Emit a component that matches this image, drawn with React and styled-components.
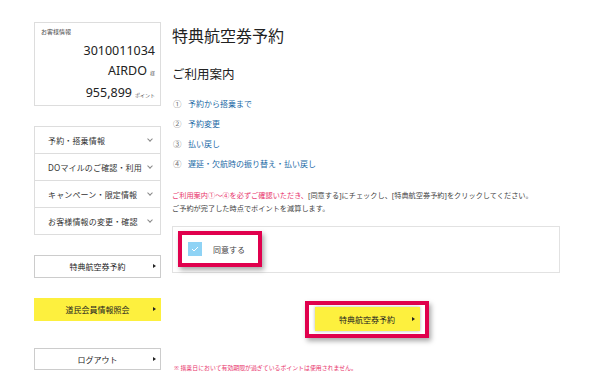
import React from 'react'
import styled, { createGlobalStyle } from 'styled-components'

const Global = createGlobalStyle`
  body {
    margin: 0;
    background: #fff;
    font-family: "Noto Sans", "Noto Sans CJK JP", sans-serif;
    color: #333;
  }
`

const Page = styled.div`
  display: flex;
  gap: 11px;
  padding: 22px 0 0 34px;
  width: 600px;
  height: 378px;
  box-sizing: border-box;
  overflow: hidden;
`

const Side = styled.div`
  width: 127px;
  display: flex;
  flex-direction: column;
`

const InfoBox = styled.div`
  border: 1px solid #ddd;
  height: 84px;
  box-sizing: border-box;
  padding: 5px 5px 0 6px;
  text-align: right;
`

const InfoLabel = styled.div`
  font-size: 6px;
  text-align: left;
  line-height: 8px;
  color: #444;
`

const InfoLine = styled.div`
  font-size: 12.5px;
  line-height: 20px;
  color: #222;
  margin-top: ${p => (p.first ? '5px' : '0')};
  small {
    font-size: 5px;
    margin-left: 3px;
    color: #555;
  }
`

const Nav = styled.ul`
  list-style: none;
  margin: 20px 0 0;
  padding: 0;
  border: 1px solid #ddd;
`

const NavItem = styled.li`
  height: 26px;
  display: flex;
  align-items: center;
  justify-content: space-between;
  padding: 0 8px 0 13px;
  font-size: 8px;
  letter-spacing: 0.15px;
  color: #333;
  & + & {
    border-top: 1px solid #ddd;
  }
`

const Chevron = styled.span`
  width: 3px;
  height: 3px;
  border-right: 1px solid #888;
  border-bottom: 1px solid #888;
  transform: rotate(45deg);
  margin-top: -3px;
`

const SideButton = styled.div`
  height: ${p => p.h || 23}px;
  margin-top: ${p => p.mt}px;
  display: flex;
  align-items: center;
  justify-content: center;
  position: relative;
  font-size: 8px;
  color: #222;
  background: ${p => (p.yellow ? '#fdf03e' : '#fff')};
  border: 1px solid ${p => (p.yellow ? '#fdf03e' : '#ccc')};
  box-sizing: border-box;
`

const Arrow = styled.span`
  position: absolute;
  right: ${p => p.r || 4}px;
  top: 50%;
  margin-top: -2.5px;
  border-left: 3px solid #222;
  border-top: 2.5px solid transparent;
  border-bottom: 2.5px solid transparent;
`

const Main = styled.div`
  width: 388px;
  padding-top: 4px;
`

const Title = styled.h1`
  margin: 0;
  font-size: 16px;
  font-weight: 400;
  line-height: 20px;
  color: #222;
`

const SubTitle = styled.h2`
  margin: 21px 0 0;
  font-size: 12.5px;
  font-weight: 400;
  line-height: 16px;
  color: #222;
`

const Guide = styled.ol`
  list-style: none;
  margin: 10px 0 0;
  padding: 0 0 0 1px;
`

const GuideItem = styled.li`
  height: 20px;
  display: flex;
  align-items: center;
  font-size: 8px;
  color: #236aa6;
  span {
    width: 15px;
    color: #777;
    font-size: 8.5px;
  }
`

const Notice = styled.p`
  margin: 16px 0 0;
  font-size: 7.2px;
  line-height: 13px;
  color: #444;
  em {
    font-style: normal;
    color: #e8336b;
  }
`

const AgreeBox = styled.div`
  margin-top: 11px;
  height: 47px;
  border: 1px solid #e2e2e2;
  box-sizing: border-box;
  padding: 4px 0 0 5px;
`

const Highlight = styled.div`
  display: flex;
  align-items: center;
  border: 4px solid #e0004d;
  box-sizing: border-box;
  box-shadow: 2px 3px 5px rgba(0, 0, 0, 0.35);
  background: #fff;
`

const AgreeFrame = styled(Highlight)`
  width: 84px;
  height: 36px;
  padding-left: 6px;
`

const Check = styled.span`
  width: 14px;
  height: 14px;
  background: #8fd3f5;
  display: flex;
  align-items: center;
  justify-content: center;
`

const AgreeLabel = styled.span`
  margin-left: 11px;
  font-size: 8px;
  color: #444;
`

const SubmitRow = styled.div`
  margin-top: 28px;
  display: flex;
  justify-content: center;
`

const SubmitFrame = styled(Highlight)`
  width: 124px;
  height: 37px;
  padding: 0 5px 1px 6px;
  margin-left: 1px;
`

const SubmitButton = styled.div`
  flex: 1;
  height: 24px;
  background: #fdf03e;
  box-shadow: 0 0 3px rgba(0, 0, 0, 0.3);
  display: flex;
  align-items: center;
  justify-content: center;
  position: relative;
  font-size: 8px;
  color: #222;
`

const Caution = styled.p`
  margin: 25px 0 0 2px;
  font-size: 5.9px;
  line-height: 10px;
  color: #e8336b;
`

const guides = [
  '予約から搭乗まで',
  '予約変更',
  '払い戻し',
  '遅延・欠航時の振り替え・払い戻し',
]

const menu = ['予約・搭乗情報', 'DOマイルのご確認・利用', 'キャンペーン・限定情報', 'お客様情報の変更・確認']

export default function App() {
  return (
    <Page>
      <Global />
      <Side>
        <InfoBox>
          <InfoLabel>お客様情報</InfoLabel>
          <InfoLine first>3010011034</InfoLine>
          <InfoLine>AIRDO<small>様</small></InfoLine>
          <InfoLine>955,899<small>ポイント</small></InfoLine>
        </InfoBox>
        <Nav>
          {menu.map(t => (
            <NavItem key={t}>
              {t}
              <Chevron />
            </NavItem>
          ))}
        </Nav>
        <SideButton mt={20}>特典航空券予約<Arrow /></SideButton>
        <SideButton mt={20} yellow>道民会員情報照会<Arrow /></SideButton>
        <SideButton mt={27} h={22}>ログアウト<Arrow /></SideButton>
      </Side>
      <Main>
        <Title>特典航空券予約</Title>
        <SubTitle>ご利用案内</SubTitle>
        <Guide>
          {guides.map((g, i) => (
            <GuideItem key={g}>
              <span>{'①②③④'[i]}</span>
              {g}
            </GuideItem>
          ))}
        </Guide>
        <Notice>
          <em>ご利用案内①〜④を必ずご確認いただき、</em>[同意する]にチェックし、[特典航空券予約]をクリックしてください。
          <br />
          ご予約が完了した時点でポイントを減算します。
        </Notice>
        <AgreeBox>
          <AgreeFrame>
            <Check>
              <svg width="8" height="6" viewBox="0 0 8 6">
                <path d="M1 3 L3 5 L7 1" fill="none" stroke="#fff" strokeWidth="1" />
              </svg>
            </Check>
            <AgreeLabel>同意する</AgreeLabel>
          </AgreeFrame>
        </AgreeBox>
        <SubmitRow>
          <SubmitFrame>
            <SubmitButton>
              特典航空券予約
              <Arrow r={5} />
            </SubmitButton>
          </SubmitFrame>
        </SubmitRow>
        <Caution>※ 搭乗日において有効期限が過ぎているポイントは使用されません。</Caution>
      </Main>
    </Page>
  )
}
